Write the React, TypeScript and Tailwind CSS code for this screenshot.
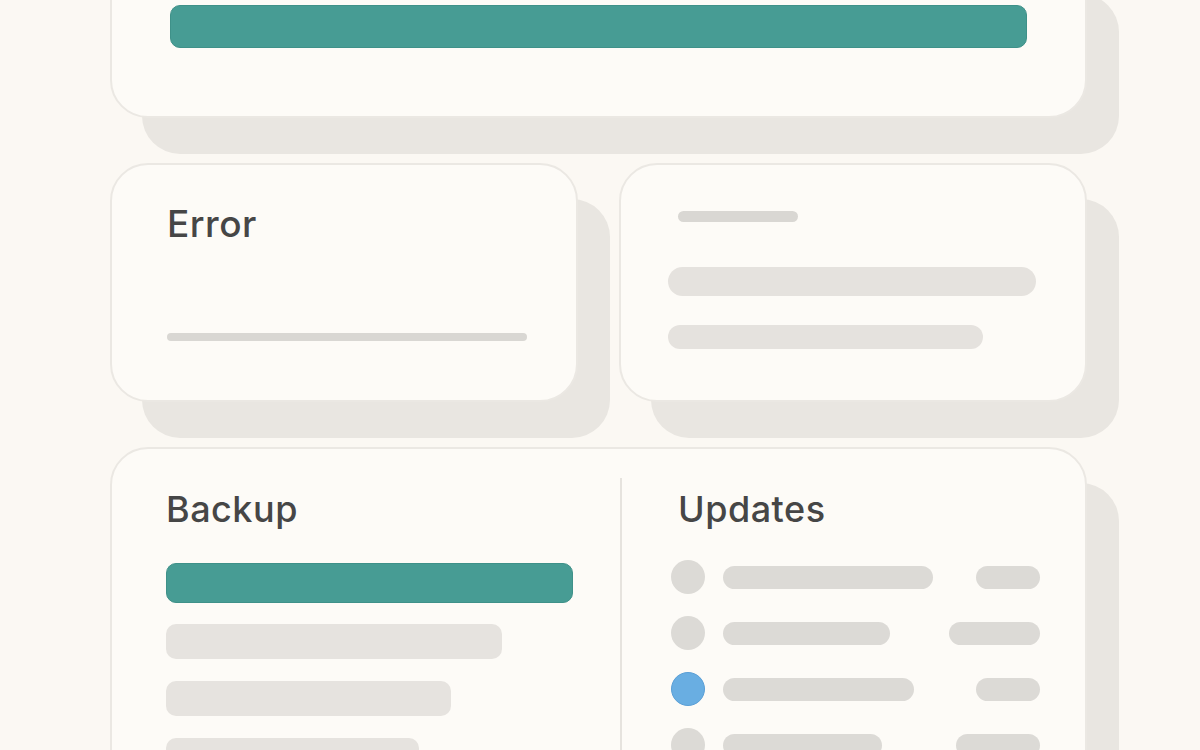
import { ReactNode } from "react";

type Row = { main: number; side: number; active?: boolean };

const updates: Row[] = [
  { main: 210, side: 64 },
  { main: 167, side: 91 },
  { main: 191, side: 64, active: true },
  { main: 159, side: 84 },
];

function Card({ className = "", children }: { className?: string; children: ReactNode }) {
  return (
    <div
      className={`bg-[#fdfbf7] border-2 border-[#ebe8e3] rounded-[38px] shadow-[32px_36px_0_#e9e6e1] ${className}`}
    >
      {children}
    </div>
  );
}

export default function App() {
  return (
    <div
      className="min-h-[750px] h-[750px] overflow-hidden bg-[#fbf8f3] text-[#464646]"
      style={{ fontFamily: "Inter, 'Open Sans', sans-serif" }}
    >
      <div className="w-[977px] ml-[110px] flex flex-col gap-[45px]">
        {/* Progress header */}
        <Card className="-mt-[42px] h-[160px] pt-[45px] px-[58px]">
          <div className="h-[43px] rounded-[10px] bg-[#479c94] border border-[#3f9189]" />
        </Card>

        {/* Status cards */}
        <div className="grid grid-cols-2 gap-[41px]">
          <Card className="h-[239px] px-[55px] pt-[37px]">
            <h2 className="text-[37px] leading-[44px] font-medium tracking-[0.5px]">Error</h2>
            <div className="mt-[87px] h-[8px] w-[360px] rounded-full bg-[#d9d7d3]" />
          </Card>
          <Card className="h-[239px] px-[47px] pt-[46px]">
            <div className="ml-[10px] h-[11px] w-[120px] rounded-full bg-[#d9d7d3]" />
            <div className="mt-[45px] h-[29px] w-[368px] rounded-full bg-[#e5e2de]" />
            <div className="mt-[29px] h-[24px] w-[315px] rounded-full bg-[#e5e2de]" />
          </Card>
        </div>

        {/* Backup / updates */}
        <Card className="h-[360px] flex">
          <div className="w-[508px] pl-[54px] pt-[38px]">
            <h2 className="text-[36px] leading-[44px] font-medium tracking-[0.5px]">Backup</h2>
            <div className="mt-[32px] h-[40px] w-[407px] rounded-[10px] bg-[#479c94] border border-[#3f9189]" />
            <div className="mt-[21px] flex flex-col gap-[22px]">
              <div className="h-[35px] w-[336px] rounded-[10px] bg-[#e6e3df]" />
              <div className="h-[35px] w-[285px] rounded-[10px] bg-[#e6e3df]" />
              <div className="h-[35px] w-[253px] rounded-[10px] bg-[#e6e3df]" />
            </div>
          </div>
          <div className="mt-[29px] w-[2px] bg-[#e6e3de]" />
          <div className="flex-1 pl-[49px] pr-[45px] pt-[38px]">
            <h2 className="ml-[7px] text-[36px] leading-[44px] font-medium tracking-[0.5px]">Updates</h2>
            <div className="mt-[29px] flex flex-col gap-[22px]">
              {updates.map((row, i) => (
                <div key={i} className="flex items-center h-[34px]">
                  <div
                    className={
                      row.active
                        ? "w-[34px] h-[34px] rounded-full bg-[#69aee2] border border-[#5a9fd6]"
                        : "w-[34px] h-[34px] rounded-full bg-[#dcdad6]"
                    }
                  />
                  <div className="ml-[18px] h-[23px] rounded-full bg-[#dcdad6]" style={{ width: row.main }} />
                  <div className="ml-auto h-[23px] rounded-full bg-[#dcdad6]" style={{ width: row.side }} />
                </div>
              ))}
            </div>
          </div>
        </Card>
      </div>
    </div>
  );
}
